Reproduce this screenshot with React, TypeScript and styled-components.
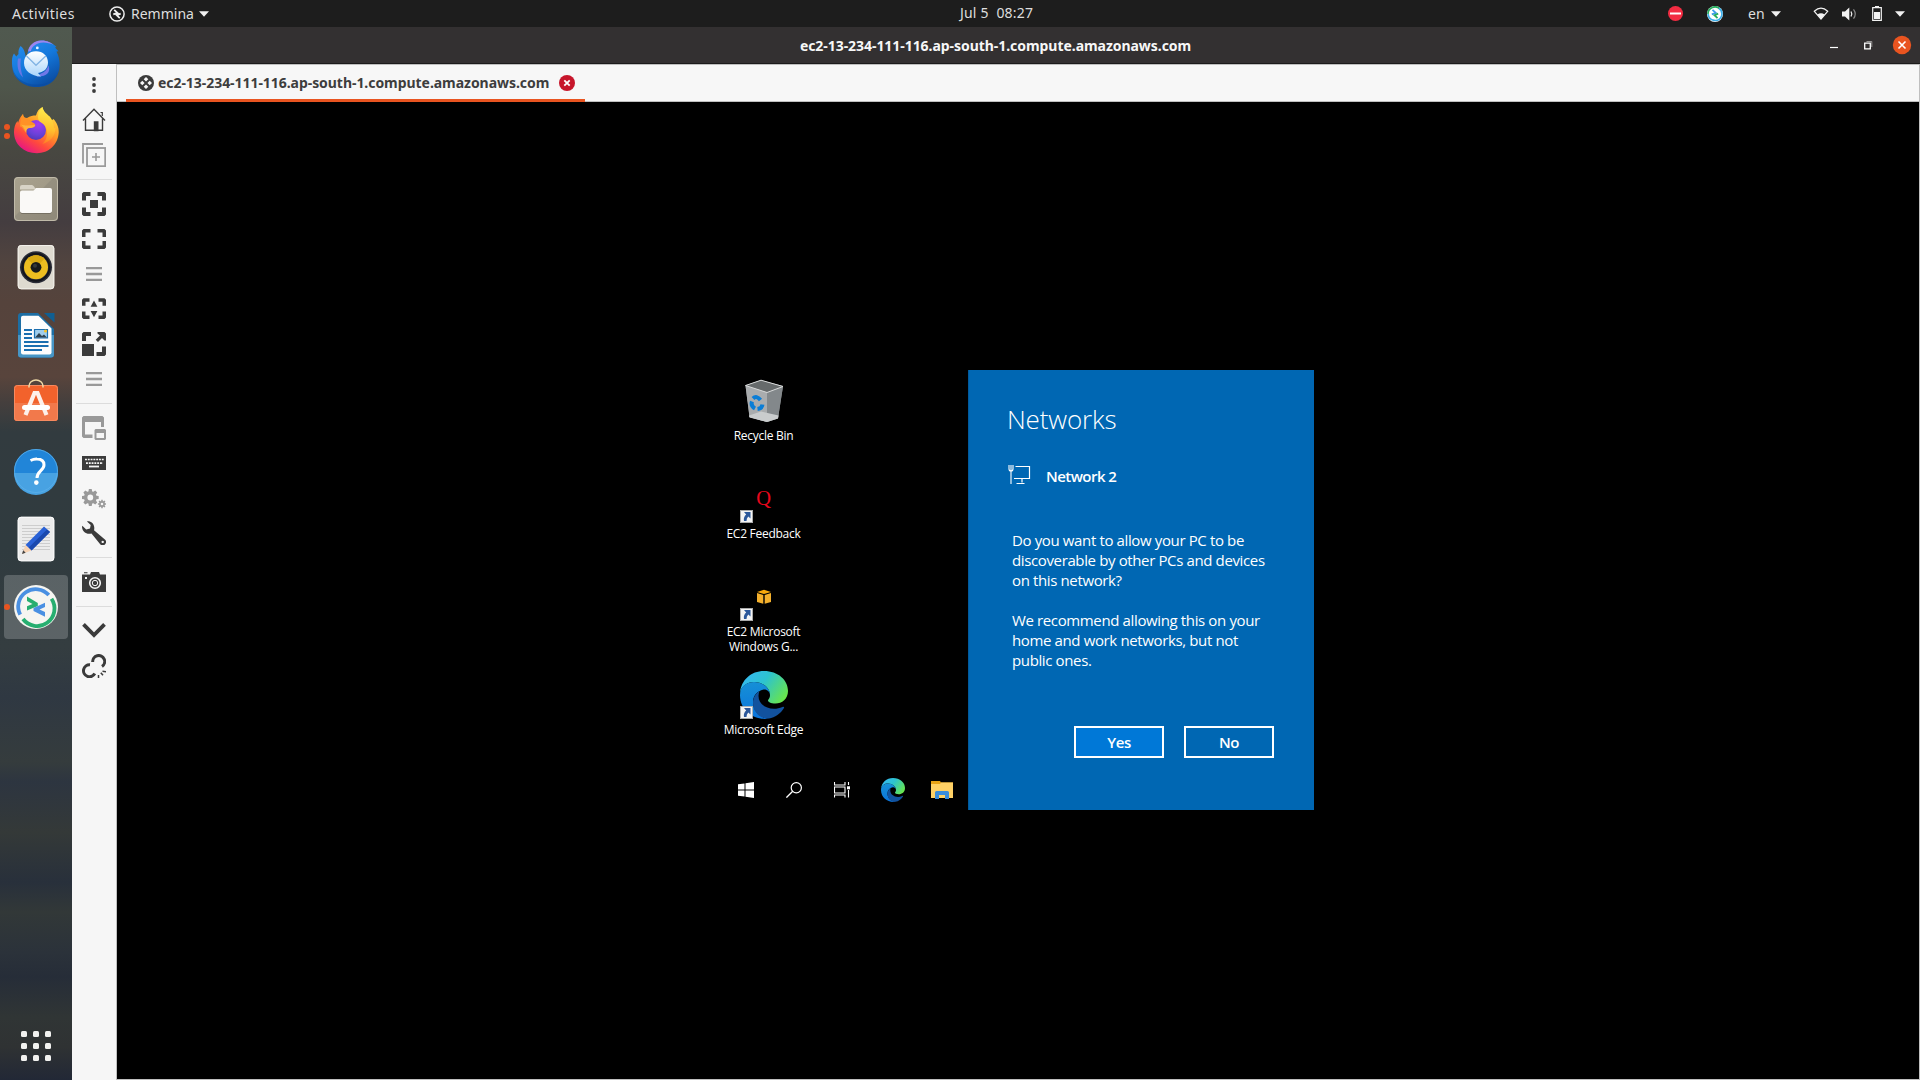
import React from 'react';
import styled, { createGlobalStyle } from 'styled-components';

const GlobalStyle = createGlobalStyle`
  * { box-sizing: border-box; }
  html, body { margin: 0; padding: 0; background: #000; overflow: hidden; }
  svg { display: block; flex: none; }
  button { font: inherit; color: inherit; padding: 0; background: none; border: 0; }
`;

const ubuntu = `'Noto Sans', 'Open Sans', sans-serif`;
const segoe = `'Open Sans', 'Noto Sans', sans-serif`;

const Screen = styled.div`
  width: 1920px;
  height: 1080px;
  display: grid;
  grid-template-rows: 27px 1053px;
  background: #000;
`;

const TopBar = styled.header`
  display: grid;
  grid-template-columns: 960px 76px 1fr;
  align-items: center;
  height: 27px;
  background: #1d1d1d;
  color: #dedede;
  font: 14px/27px ${ubuntu};
`;
const BarSide = styled.div<{ $end?: boolean }>`
  display: flex;
  align-items: center;
  height: 27px;
  justify-content: ${p => (p.$end ? 'flex-end' : 'flex-start')};
  padding: ${p => (p.$end ? '0 15px 0 0' : '0 0 0 12px')};
`;
const BarText = styled.span<{ $track?: number; $gap?: number; $w?: number }>`
  white-space: pre;
  letter-spacing: ${p => p.$track ?? 0}px;
  margin-left: ${p => p.$gap ?? 0}px;
  width: ${p => (p.$w ? `${p.$w}px` : 'auto')};
`;
const Clock = styled.time`
  white-space: pre;
  letter-spacing: 0.2px;
  line-height: 25px;
  height: 27px;
`;
const BarIcon = styled.span<{ $gap: number }>`
  margin-left: ${p => p.$gap}px;
`;

const Workspace = styled.div`
  display: grid;
  grid-template-columns: 72px 1848px;
`;

const Dock = styled.nav`
  display: flex;
  flex-direction: column;
  align-items: center;
  padding-top: 2px;
  height: 1053px;
  background: linear-gradient(
    180deg,
    #50594f 0, #4f564b 60px, #484841 120px, #443d40 195px, #51443f 235px,
    #55433c 275px, #58443c 350px, #453f3d 375px, #323b3f 405px, #303b3f 520px,
    #343d40 620px, #2f3842 670px, #353c3d 735px, #2d3540 755px, #343938 805px,
    #28303b 855px, #323838 885px, #2b323a 925px, #262d38 950px, #303535 990px,
    #2f3233 1020px, #222836 1053px
  );
`;
const DockItem = styled.div<{ $active?: boolean }>`
  position: relative;
  width: 64px;
  height: 64px;
  margin: 2px 0;
  display: grid;
  place-items: center;
  border-radius: 4px;
  background: ${p => (p.$active ? 'rgba(255,255,255,0.2)' : 'transparent')};
`;
const RunDots = styled.span`
  position: absolute;
  left: 0;
  top: 0;
  height: 64px;
  display: flex;
  flex-direction: column;
  justify-content: center;
  gap: 3px;
`;
const RunDot = styled.i`
  width: 6px;
  height: 6px;
  border-radius: 50%;
  background: #e95420;
`;
const AppsButton = styled.div`
  margin-top: auto;
  margin-bottom: 19px;
  display: grid;
  grid-template-columns: repeat(3, 6px);
  gap: 6px;
`;
const AppsDot = styled.i`
  width: 6px;
  height: 6px;
  border-radius: 1.5px;
  background: #f2f2f0;
`;

const Window = styled.section`
  display: grid;
  grid-template-rows: 37px 1016px;
`;
const TitleBar = styled.div`
  display: grid;
  grid-template-columns: 1fr 400px 1fr;
  align-items: center;
  height: 37px;
  background: #333031;
  border-bottom: 1px solid #1c1b1b;
  color: #f7f7f7;
`;
const WindowTitle = styled.h1`
  grid-column: 2;
  margin: 0;
  padding: 2px 1px 0 0;
  font: 700 14px/34px ${ubuntu};
  letter-spacing: -0.05px;
  text-align: center;
  white-space: nowrap;
`;
const WindowControls = styled.div`
  display: flex;
  justify-content: flex-end;
  align-items: center;
  padding-right: 8px;
`;

const WindowBody = styled.div`
  display: grid;
  grid-template-columns: 44px 1804px;
  background: #f6f6f6;
`;
const Toolbar = styled.aside`
  display: flex;
  flex-direction: column;
  align-items: center;
  gap: 11px;
  padding-top: 9px;
  background: #f6f6f6;
`;
const ToolSeparator = styled.i`
  width: 36px;
  height: 3px;
  border: solid transparent;
  border-width: 1px 0;
  background: #dcdcdc content-box;
`;

const Main = styled.div`
  display: grid;
  grid-template-rows: 37px 977px;
  border: 1px solid #bfbfbf;
`;
const TabBar = styled.div`
  display: flex;
  padding-left: 9px;
  background: #f7f7f7;
  border-bottom: 1px solid #bfbfbf;
  height: 37px;
`;
const Tab = styled.div`
  display: flex;
  align-items: center;
  width: 459px;
  height: 37px;
  padding: 1px 10px 0 12px;
  border-bottom: 3px solid #e95420;
  color: #3d3d3d;
  font: 700 14px/34px ${ubuntu};
`;
const TabLabel = styled.span`
  width: 401px;
  margin-left: 4px;
  letter-spacing: -0.05px;
  white-space: nowrap;
`;

const Viewport = styled.div`
  background: #000;
  padding: 268px 0 0 599px;
  display: flex;
  align-items: flex-start;
`;
const Desktop = styled.div`
  width: 252px;
  height: 440px;
  display: flex;
  flex-direction: column;
`;
const Shortcuts = styled.div`
  width: 96px;
  height: 400px;
  padding-top: 7px;
`;
const Shortcut = styled.div`
  width: 96px;
  height: 98px;
  display: flex;
  flex-direction: column;
  align-items: center;
  gap: 3px;
`;
const ShortcutName = styled.span`
  color: #fff;
  font: 12px/15px ${segoe};
  letter-spacing: -0.27px;
  padding-right: 1px;
  text-align: center;
  white-space: pre;
`;
const Taskbar = styled.div`
  height: 40px;
  display: flex;
  align-items: center;
  padding-left: 22px;
`;
const TaskIcon = styled.span<{ $gap?: number }>`
  margin-left: ${p => p.$gap ?? 0}px;
`;

const Flyout = styled.section`
  width: 346px;
  height: 440px;
  background: #0067b3;
  border-left: 1px solid #00599c;
  color: #fff;
  padding: 31px 39px 0 39px;
  font-family: ${segoe};
`;
const FlyoutTitle = styled.h2`
  margin: 0 0 0 -1px;
  font: 340 26px/36px ${segoe};
  letter-spacing: -0.15px;
`;
const NetworkRow = styled.div`
  display: flex;
  align-items: center;
  gap: 15px;
  height: 24px;
  margin-top: 25px;
`;
const NetworkIcon = styled.span`
  padding-top: 2px;
`;
const NetworkName = styled.strong`
  font: 600 15px/24px ${segoe};
  letter-spacing: -0.55px;
  margin-top: 3px;
`;
const Message = styled.p<{ $top: number }>`
  margin: ${p => p.$top}px 0 0 4px;
  font: 15px/20px ${segoe};
  letter-spacing: -0.37px;
  white-space: pre;
`;
const Actions = styled.div`
  display: flex;
  gap: 20px;
  margin: 56px 0 0 66px;
`;
const ActionButton = styled.button<{ $primary?: boolean }>`
  width: 90px;
  height: 32px;
  border: 2px solid #fff;
  background: ${p => (p.$primary ? '#0078d7' : 'transparent')};
  font: 600 15px/28px ${segoe};
  letter-spacing: -0.4px;
`;

const Caret = () => (
  <svg width="10" height="6" viewBox="0 0 10 6"><path d="M0 .3h10L5 5.8z" fill="#f0f0f0" /></svg>
);

const RemminaSmall = ({ mono }: { mono?: boolean }) => (
  <svg width="16" height="16" viewBox="0 0 16 16">
    {mono ? (
      <>
        <circle cx="8" cy="8" r="7.1" fill="none" stroke="#eee" strokeWidth="1.5" />
        <path d="M5.200 3.800 8.400 6.800 4.300 8.300M10.800 12.200 7.700 9.200 11.700 7.700" fill="none" stroke="#eee" strokeWidth="1.8" />
      </>
    ) : (
      <>
        <circle cx="8" cy="8" r="8" fill="#fff" />
        <path d="M1 8a7 7 0 0 1 12-5" fill="none" stroke="#27ae60" strokeWidth="1.7" />
        <path d="M12 2.3A7 7 0 0 1 14.6 10" fill="none" stroke="#3daee9" strokeWidth="1.7" />
        <path d="M1.1 8A7 7 0 0 0 14.6 10" fill="none" stroke="#3daee9" strokeWidth="1.7" />
        <path d="M5.500 3.800 8.800 6.800 4.800 8.300" fill="none" stroke="#3d9be9" strokeWidth="1.8" />
        <path d="M10.500 12.200 7.500 9.200 11.200 7.700" fill="none" stroke="#27ae60" strokeWidth="1.8" />
      </>
    )}
  </svg>
);

const Thunderbird = () => (
  <svg width="48" height="48" viewBox="0 0 48 48">
    <defs>
      <linearGradient id="tb" x1="0" y1="0" x2="0.6" y2="1"><stop offset="0" stopColor="#2a92f2" /><stop offset="0.55" stopColor="#1478dc" /><stop offset="1" stopColor="#0b4fa6" /></linearGradient>
      <linearGradient id="tbm" x1="0" y1="0" x2="0" y2="1"><stop offset="0" stopColor="#fff" /><stop offset="1" stopColor="#a9d5fb" /></linearGradient>
    </defs>
    <path d="M8.500 7c-2 3-2.300 6-2 8L4.300 17.500 2 14.500C-.5 18 0 23 0 25c.3 7 2.500 12 6 15.500 5 5 12 7.500 19 7.500 13 0 22-8.500 22.600-21.500.2-5-1-10-3.100-14l2-.3-3.500-3.700 1.500-.6C40 3.500 33 .8 27.500 1.800 20 3.500 17 8 16 12.500l-1.800 6c-1.500-3-1-8.500-5.700-11.500z" fill="url(#tb)" />
    <path d="M16 12.500c1-6 5.500-10.500 13-11 6-.2 10 2.200 12.500 4.300-5-2.300-11-3.200-15.500-1.300-5 2-6.500 5-7 7.500z" fill="#9a86ef" />
    <path d="M0 25c.5 13 8 20 18 22.500C30 49 42 44 47 32c-3 10-11 13.500-22 13.500C11 45.500 1 38 0 25z" fill="#0a4ba0" opacity=".55" />
    <path d="M6 19.500c-1.500 8 .5 15 5 19-1.500-5-3.500-12-2-19z" fill="#8277e8" opacity=".75" />
    <path d="M29 34.500c4-1.500 6-4 7.500-8 2.500 7-2 11.500-12 11z" fill="#6f78e8" />
    <path d="M24 12.200c7 0 12 4.800 12 11.300 0 6-4 9-8 10l-2 .5 3 3.500c-10-.2-17-6-17-13.500 0-7 5-11.800 12-11.800z" fill="url(#tbm)" />
    <path d="M14.500 17 24 26.300 33.800 17" fill="none" stroke="#82b4e4" strokeWidth="1.300" />
    <circle cx="25.300" cy="8.900" r="1.400" fill="#e8f6ff" />
  </svg>
);

const Firefox = () => (
  <svg width="48" height="48" viewBox="0 0 48 48">
    <defs>
      <linearGradient id="ff" x1="0.85" y1="0.05" x2="0.25" y2="1"><stop offset="0" stopColor="#ffe94a" /><stop offset="0.4" stopColor="#ff9a25" /><stop offset="0.7" stopColor="#ff4a3d" /><stop offset="1" stopColor="#e5108a" /></linearGradient>
      <radialGradient id="fp" cx="0.6" cy="0.2" r="0.9"><stop offset="0" stopColor="#a63bf0" /><stop offset="0.6" stopColor="#6a41d8" /><stop offset="1" stopColor="#4a36b0" /></radialGradient>
      <linearGradient id="fy" x1="0.6" y1="0" x2="0.5" y2="1"><stop offset="0" stopColor="#fff04f" /><stop offset="0.6" stopColor="#ffc02e" /><stop offset="1" stopColor="#ff7d26" /></linearGradient>
    </defs>
    <path d="M11 7c0 3 2 4 4 4 3-2 6-2.500 9-2.500 1-4 3-7 6.500-8.500.5 4 3.500 6.500 7 9.500 1 .8 1.500 2.500 2 4l2-1.500c3 3.500 5.500 8 5.200 13.500C46 38 36.500 46.200 25 46.200 12 46.200 2 37.500 2 25c0-4 1-8.500 3.500-11l.5 2C7 12 9 9 11 7z" fill="url(#ff)" />
    <circle cx="24" cy="23" r="10" fill="url(#fp)" />
    <path d="M30.500 0c.5 4 3.500 6.500 7 9.500 3 3 4.500 8 4.500 12l1.500-1c0 9-6 14.500-13 16.500 3-3 5-7 4.500-12-.5-5.500-3-8-7.500-10.500C25 12 25.500 4 30.500 0z" fill="url(#fy)" />
    <path d="M11 7c0 3 2 4.500 4 5 3 .3 4 2.500 8 5 1 2-2 3.500-5.500 3.500-3 0-3.500 2-3 5.500C12 24.500 11 19.500 8 19.500 8 14.500 9 10.500 11 7z" fill="#ff9226" />
    <path d="M9 17.500c4 1.500 8 1 14 .5 1 1.500-2 3-5 3-2.500 0-4 2-4 4.500-1-3-2.500-6-5-8z" fill="#ffb23c" />
  </svg>
);

const Files = () => (
  <svg width="48" height="48" viewBox="0 0 48 48">
    <defs><linearGradient id="fl" x1="0" y1="0" x2="1" y2="1"><stop offset="0" stopColor="#a8a18e" /><stop offset=".45" stopColor="#a29b88" /><stop offset=".46" stopColor="#969080" /><stop offset="1" stopColor="#8f8979" /></linearGradient></defs>
    <rect x="2" y="2" width="44" height="44" rx="4" fill="url(#fl)" />
    <rect x="2.500" y="2.500" width="43" height="43" rx="3.500" fill="none" stroke="#c0baa9" />
    <path d="M8 12q0-2 2-2h10q1 0 2 1.500l2 3H8z" fill="#d8d3c6" />
    <path d="M8 17.500q0-2 2-2h11q1 0 2-1.500l1-1h14q2 0 2 2V36q0 2-2 2H10q-2 0-2-2z" fill="#faf9f7" />
    <path d="M8.500 37.500q.5 1 1.500 1h28q1 0 1.500-1" fill="none" stroke="#6f6a5d" strokeWidth=".8" />
  </svg>
);

const Rhythmbox = () => (
  <svg width="48" height="48" viewBox="0 0 48 48">
    <rect x="5.700" y="2" width="36.600" height="44.300" rx="3.500" fill="#dedad0" />
    <rect x="6.200" y="2.500" width="35.600" height="43.300" rx="3" fill="none" stroke="#f3f1eb" />
    <circle cx="24" cy="24.300" r="16" fill="#2a2c37" />
    <circle cx="24" cy="24.300" r="13.500" fill="none" stroke="#14151c" strokeWidth="2" />
    <circle cx="24" cy="24.300" r="12" fill="#edbd20" />
    <path d="M15.500 15.800a12 12 0 0 1 17 0L24 24.300z" fill="#d9a913" />
    <circle cx="24" cy="24.300" r="5.400" fill="#17191b" />
    <circle cx="23" cy="22.800" r="2" fill="#34383b" />
  </svg>
);

const Writer = () => (
  <svg width="48" height="48" viewBox="0 0 48 48">
    <path d="M9 2h17l16 16v25.500q0 3-3 3H9q-3 0-3-3V5q0-3 3-3z" fill="#1c6ea4" />
    <path d="M6 24h36v19.500q0 3-3 3H9q-3 0-3-3z" fill="#4796c6" />
    <path d="M32 2h10.500v9.500z" fill="#105f92" />
    <path d="M11 4.700h15.500L39.500 17.500v24q0 2-2 2H11q-2 0-2-2V6.700q0-2 2-2z" fill="#fdfdfd" />
    <g stroke="#1b6fb0" strokeWidth="1.900"><path d="M12 19h8M12 23h8M12 27h8M12 31h24.500M12 35h24.500M12 39h18" /></g>
    <path d="M22.500 18.500h13v8.500h-13z" fill="#9fcdec" stroke="#1b6fb0" strokeWidth="1.200" />
    <path d="m23 26.500 4-4.500 3 3 2-1.500 3 3z" fill="#2e4250" /><circle cx="33.500" cy="20" r="1.500" fill="#f8c020" />
  </svg>
);

const Software = () => (
  <svg width="48" height="48" viewBox="0 0 48 48">
    <rect x="2" y="6" width="44" height="36" rx="3.500" fill="#f2622c" />
    <path d="M2 24h44v14.500q0 3.500-3.500 3.500h-37Q2 42 2 38.500z" fill="#f2794b" />
    <rect x="2.500" y="6.500" width="43" height="35" rx="3" fill="none" stroke="#f78a60" />
    <path d="M17 8.500V7a7 6 0 0 1 14 0v1.500" fill="none" stroke="#f0d9a6" strokeWidth="1.500" />
    <path d="M13.500 36 22.500 14h3l9 22" fill="none" stroke="#fdf0ea" strokeWidth="4.200" />
    <rect x="10" y="26" width="28" height="5" rx="2.500" fill="#fff" />
  </svg>
);

const Help = () => (
  <svg width="48" height="48" viewBox="0 0 48 48">
    <circle cx="24" cy="24" r="22" fill="#2185d8" />
    <path d="M2 26h44a22 22 0 0 1-44 0z" fill="#48a2e2" />
    <circle cx="24" cy="24" r="21.500" fill="none" stroke="#5cb0ea" strokeWidth=".8" />
    <path d="M18.500 13.500Q22 11.800 25 12c4.500 0 7 2.400 7 6 0 5.500-7 6-7 13" fill="none" stroke="#fff" strokeWidth="3" />
    <circle cx="24.300" cy="35.600" r="2.300" fill="#fff" />
  </svg>
);

const TextEditor = () => (
  <svg width="48" height="48" viewBox="0 0 48 48">
    <rect x="5.700" y="1.800" width="36.600" height="44.500" rx="3.500" fill="#ececec" />
    <rect x="6.200" y="2.300" width="35.600" height="43.500" rx="3" fill="none" stroke="#fbfbfb" />
    <path d="M10 10.500h28M10 13.500h28M10 16.500h28M10 19.500h28M10 22.500h28M10 25.500h28M10 28.500h28M10 31.500h28M10 34.500h28" stroke="#cdcdcd" strokeWidth="1" />
    <path d="m32 11.500 6 5.500-18.500 18.500-6-5.500z" fill="#2a62d6" />
    <path d="m35 14.500 3 2.500-18.500 18.500-3-2.700z" fill="#1a49ae" />
    <path d="m13.500 30 6 5.500L10 39z" fill="#f7d3b4" /><path d="m11.200 35.300 2.500 2.400L10 39z" fill="#444" />
  </svg>
);

const RemminaIcon = () => (
  <svg width="48" height="48" viewBox="0 0 48 48">
    <circle cx="24" cy="24" r="22" fill="#f6f5f1" />
    <path d="M8.200 31.700A17.500 17.500 0 0 1 36.800 12" fill="none" stroke="#4a90e2" strokeWidth="3.800" />
    <path d="M39.500 15.700A17.500 17.500 0 0 1 11 36" fill="none" stroke="#27ae70" strokeWidth="3.800" />
    <path d="M15 13.500 25.800 20v3L15 27.500v-4.300l5.500-2.200L15 18z" fill="#27ae70" />
    <path d="M33 33.800 21.500 28v-3L33 19.800v4.300l-5.500 2.500 5.500 2.500z" fill="#4a90e2" />
  </svg>
);

type ToolKind = 'dots' | 'home' | 'dup' | 'fit' | 'full' | 'menu' | 'dynamic' | 'scale' | 'multi' | 'keyboard' | 'gears' | 'wrench' | 'camera' | 'chevron' | 'unlink';
const DARK = '#3b3b3b';
const GREY = '#999999';

const gear = (cx: number, cy: number, r: number, inner: number, hole: number, teeth: number) => {
  const pts: string[] = [];
  for (let i = 0; i < teeth; i++) {
    const a = (i * 2 * Math.PI) / teeth;
    const s = Math.PI / teeth;
    [[-0.75, inner], [-0.42, r], [0.42, r], [0.75, inner]].forEach(([k, rad]) => {
      pts.push(`${(cx + Math.cos(a + k * s) * rad).toFixed(2)} ${(cy + Math.sin(a + k * s) * rad).toFixed(2)}`);
    });
  }
  return `M${pts.join('L')}ZM${cx - hole} ${cy}a${hole} ${hole} 0 1 0 ${2 * hole} 0a${hole} ${hole} 0 1 0 ${-2 * hole} 0Z`;
};

const toolArt: Record<ToolKind, React.ReactNode> = {
  dots: <g fill={DARK}><circle cx="12" cy="6" r="1.900" /><circle cx="12" cy="12" r="1.900" /><circle cx="12" cy="18" r="1.900" /></g>,
  home: <g fill="none" stroke={DARK} strokeWidth="1.400"><path d="M1 12.500 12 1.300l11 11.200M3.500 10.500v11.800h17V10.500" /><path d="M18.500 4.500h1.800V8" strokeWidth="1.200" /><path d="M12.500 22.500V14h3.300v8.500z" fill={DARK} /></g>,
  dup: <g fill="none" stroke={GREY} strokeWidth="1.800"><path d="M1 20.500V1h20" /><rect x="5" y="5" width="18.200" height="18.200" /><path d="M14 10v8M10 14h8" strokeWidth="1.600" /></g>,
  fit: <g fill={DARK}><path d="M1.500 0H8.500v4H4v4.500H0v-7zM15.500 0h7L24 1.500v7h-4V4h-4.500zM0 15.500h4V20h4.500v4h-7L0 22.500zM20 15.500h4v7L22.500 24h-7v-4H20z" /><path d="M8 8h8v8H8z" /></g>,
  full: <path fill={DARK} d="M1.500 2H8.500v3.500H3.500v4.500H0V3.500zM15.500 2h7L24 3.500V10h-3.500V5.500h-5zM0 14h3.500v4.500h5V22h-7L0 20.500zM20.500 14H24v6.500L22.500 22h-7v-3.500h5z" />,
  menu: <path d="M4 6.100h16M4 12h16M4 17.900h16" stroke={GREY} strokeWidth="2.400" />,
  dynamic: <g fill={DARK}><path d="M1.500 1.300H7.500v3.500H3.500v4H0V2.800zM16.500 1.300h6L24 2.800v6h-3.500v-4h-4zM0 14.500h3.500v4h4V22h-6L0 20.500zM20.500 14.500H24v6L22.500 22h-6v-3.500h4z" /><path d="m12 3.500 3.400 6.200H8.600zM12 20.300l3.400-6.200H8.600z" /></g>,
  scale: <g fill={DARK}><path d="M0 12h12v12H0zM1.500 0H9v4H4v5H0V1.500zM20 14.500h4v8L22.500 24h-8v-4H20z" /><path d="M15.500 0H22.500L24 1.500v7h-1.500L20 6l-4 4-2.300-2.200L18 3.600 15.500 1.500z" /></g>,
  multi: <g fill={GREY}><path d="M1.500 0h19L22 1.500V11h-3V6H3v12.500h7.500V22h-9L0 20.500v-19z" /><path fillRule="evenodd" d="M13.500 13H23l1 1v9l-1 1h-9.500l-1-1v-9zm1 4v5h7.500v-5z" /></g>,
  keyboard: <g><rect y="5" width="24" height="14" fill={DARK} /><path d="M3 8.500h19M4 12.100h17" stroke="#f6f6f6" strokeWidth="1.700" strokeDasharray="1.900 .9" /><path d="M7 15.500h10" stroke="#f6f6f6" strokeWidth="1.800" /></g>,
  gears: <g fill={GREY} fillRule="evenodd"><path d={gear(8.3, 11.5, 8.5, 6.4, 2.9, 8)} /><path d={gear(20, 18, 4.2, 3, 1.3, 8)} /></g>,
  wrench: <path fill={DARK} fillRule="evenodd" d="M5 .4C9 0 12.500 3 12.300 7.200c0 .9-.1 1.400-.3 2l10.900 9.300a3.300 3.300 0 0 1-4.500 4.900L9.500 12.400C5 13.700.5 11.500 0 6l.3-1.200 3.900 3.600 3.800-.8.700-3.500zM20.700 19.700a1.200 1.200 0 1 0 .01 0z" />,
  camera: <g fill={DARK}><path d="M0 4.500h8L9 2h8l1 2.500h6V22H0zM2 2.300h3.500v1H2z" /><circle cx="13" cy="13" r="5.300" fill={DARK} stroke="#f6f6f6" strokeWidth="1.600" /><circle cx="13" cy="13" r="2.700" fill="none" stroke="#f6f6f6" strokeWidth="1" /><path d="M3 8h2" stroke="#f6f6f6" strokeWidth="1.800" /></g>,
  chevron: <path d="M1.500 5.300 12 16l10.500-10.700" fill="none" stroke={DARK} strokeWidth="3.800" />,
  unlink: <g fill="none" stroke={DARK}><path d="M10.700 8A6 6 0 1 1 20 12.500M8 10.700A6 6 0 1 0 12.800 19.500" strokeWidth="3" /><path d="M16.500 21v3M18.800 18.800l2.200 2.500M20.500 17.300l3.500.4" strokeWidth="1.500" /></g>,
};
const ToolIcon = ({ kind }: { kind: ToolKind }) => (
  <svg width="24" height="24" viewBox="0 0 24 24">{toolArt[kind]}</svg>
);

const TOOLS: (ToolKind | '|')[] = ['dots', 'home', 'dup', '|', 'fit', 'full', 'menu', 'dynamic', 'scale', 'menu', '|', 'multi', 'keyboard', 'gears', 'wrench', '|', 'camera', '|', 'chevron', 'unlink'];

const ShortcutArrow = () => (
  <g><rect x=".4" y="35.400" width="12.200" height="12.200" fill="#f4f4f4" stroke="#b0b0b0" strokeWidth=".8" /><path d="M4 37h6.500v6.500L8.300 41.500Q6.500 43 6.500 46H4q-.8-4 2.200-6.500z" fill="#2b579a" /></g>
);

const EdgeShape = ({ id }: { id: string }) => (
  <g>
    <defs>
      <linearGradient id={`${id}a`} x1="0" y1=".2" x2="1" y2=".7"><stop offset="0" stopColor="#35b8f5" /><stop offset=".45" stopColor="#2dc3cf" /><stop offset="1" stopColor="#69e54b" /></linearGradient>
      <linearGradient id={`${id}b`} x1=".3" y1="0" x2=".4" y2="1"><stop offset="0" stopColor="#1690d6" /><stop offset="1" stopColor="#0a74dc" /></linearGradient>
    </defs>
    <path d="M0 22C1 9 11 0 24 0c14 0 24 9 24 20 0 8-6 12.500-12.500 12.500-5 0-7.500-1.500-7.500-3 0-1 2-2 2-5.500 0-7-7-13-16-13C7 11 1.500 15 0 22z" fill={`url(#${id}a)`} />
    <path d="M0 24c0-8 6-13 14-13 9 0 16 6 16 13 0-3-3-6-6.500-5.500C17 20 13 25 13 31c0 9 7 16 16 16.500C15 50 0 40 0 24z" fill={`url(#${id}b)`} />
    <path d="M19.500 20C16 22.500 13 26 13 32c0 9 7 16 16 15.600 6-1 11.500-5 15-10.600.5-1-.5-1.700-1.500-1C31 41 18.500 35 18.500 25q0-3 1-5z" fill="#12529e" />
  </g>
);

const RecycleBin = () => (
  <svg width="48" height="48" viewBox="0 0 48 48">
    <path d="M5.500 8.500 21 3.200 43 9 38 41.500 27 45 9.500 40z" fill="#8d9194" />
    <path d="M5.500 8.500 27 15.500 27 45 9.500 40z" fill="#a9acae" /><path d="M27 15.500 43 9.500 38 41 27 45z" fill="#83888b" />
    <path d="M9 38.500 21 34.500l17.500 4L38 41.500 27 45 9.500 40.500z" fill="#c9cccd" />
    <path d="M5.500 8.500 21 3.200 43 9.500 27 15.500z" fill="#666a6b" stroke="#d8dada" strokeWidth="1" />
    <g fill="none" stroke="#0a7dd6" strokeWidth="4"><path d="M13 21.500q3.500-3.500 7.500 1.500M12 24.500q-1.500 4.500 3 7M22.500 27.500q-.5 4-5 4.500" /></g>
  </svg>
);
const FeedbackIcon = () => (
  <svg width="48" height="48" viewBox="0 0 48 48"><text x="16.300" y="30" fontFamily="'Liberation Serif', serif" fontSize="20.500" fill="#e8071c">Q</text><ShortcutArrow /></svg>
);
const GuideIcon = () => (
  <svg width="48" height="48" viewBox="0 0 48 48">
    <path d="m17 19 7-2.200 7 2.200-7 2z" fill="#f9a90c" /><path d="m17 20 6.300 2v8.700L17 29zM31 20l-6.300 2v8.700L31 29z" fill="#f4b02c" /><ShortcutArrow />
  </svg>
);
const EdgeIcon = () => (
  <svg width="48" height="48" viewBox="0 0 48 48"><EdgeShape id="edgeL" /><ShortcutArrow /></svg>
);

const StatusArea = () => (
  <BarSide $end>
    <BarIcon $gap={0}><svg width="15" height="15" viewBox="0 0 15 15"><circle cx="7.500" cy="7.500" r="7.500" fill="#f22c42" /><path d="M2 7.500h11" stroke="#fff" strokeWidth="2" /></svg></BarIcon>
    <BarIcon $gap={24}><RemminaSmall /></BarIcon>
    <BarText $gap={25} $w={17}>en</BarText>
    <BarIcon $gap={6}><Caret /></BarIcon>
    <BarIcon $gap={32}>
      <svg width="16" height="13" viewBox="0 0 16 13"><path d="M1.300 4.300Q8-2.200 14.700 4.300L8 12z" fill="none" stroke="#f2f2f2" strokeWidth="1.200" /><path d="M4.300 7.500Q8 4.800 11.700 7.500L8 12z" fill="#f2f2f2" /></svg>
    </BarIcon>
    <BarIcon $gap={13}>
      <svg width="15" height="14" viewBox="0 0 15 14"><path d="M0 4.500h3L7.300.5v13L3 9.500H0z" fill="#f2f2f2" /><path d="M9 4.500q1.600 2.500 0 5" fill="none" stroke="#f2f2f2" strokeWidth="1.300" /><path d="M11.500 2.300q3.500 4.700 0 9.400" fill="none" stroke="#8a8a8a" strokeWidth="1.200" /></svg>
    </BarIcon>
    <BarIcon $gap={15}>
      <svg width="10" height="15" viewBox="0 0 10 15"><path d="M.7 1.700h8.600v12.600H.7z" fill="none" stroke="#f2f2f2" strokeWidth="1.200" /><path d="M3 0h4v1.500H3zM2 6h6v7H2z" fill="#f2f2f2" /></svg>
    </BarIcon>
    <BarIcon $gap={13}><Caret /></BarIcon>
  </BarSide>
);

const DOCK: { icon: React.ReactNode; dots?: number; active?: boolean }[] = [
  { icon: <Thunderbird /> }, { icon: <Firefox />, dots: 2 }, { icon: <Files /> }, { icon: <Rhythmbox /> },
  { icon: <Writer /> }, { icon: <Software /> }, { icon: <Help /> }, { icon: <TextEditor /> },
  { icon: <RemminaIcon />, dots: 1, active: true },
];

const HOST = 'ec2-13-234-111-116.ap-south-1.compute.amazonaws.com';

export default function App() {
  return (
    <>
      <GlobalStyle />
      <Screen>
        <TopBar>
          <BarSide>
            <BarText $w={97} $track={0.45}>Activities</BarText>
            <BarIcon $gap={0}><RemminaSmall mono /></BarIcon>
            <BarText $gap={6} $w={62}>Remmina</BarText>
            <BarIcon $gap={6}><Caret /></BarIcon>
          </BarSide>
          <Clock>{'Jul 5  08:27'}</Clock>
          <StatusArea />
        </TopBar>
        <Workspace>
          <Dock>
            {DOCK.map((d, i) => (
              <DockItem key={i} $active={d.active}>
                {d.dots && <RunDots>{Array.from({ length: d.dots }, (_, k) => <RunDot key={k} />)}</RunDots>}
                {d.icon}
              </DockItem>
            ))}
            <AppsButton>{Array.from({ length: 9 }, (_, i) => <AppsDot key={i} />)}</AppsButton>
          </Dock>
          <Window>
            <TitleBar>
              <WindowTitle>{HOST}</WindowTitle>
              <WindowControls>
                <svg width="82" height="20" viewBox="0 0 82 20">
                  <path d="M0 12.500h8" stroke="#fff" strokeWidth="1.200" />
                  <path d="M34.700 8.200h5.600v5.600h-5.600z" fill="none" stroke="#fff" strokeWidth="1.300" />
                  <path d="M36.500 6.500h5.300v5.500" fill="none" stroke="#9a9898" strokeWidth="1" />
                  <circle cx="72" cy="10" r="9.200" fill="#e95420" />
                  <path d="m68.500 6.500 7 7m0-7-7 7" stroke="#fff" strokeWidth="1.600" />
                </svg>
              </WindowControls>
            </TitleBar>
            <WindowBody>
              <Toolbar>
                {TOOLS.map((t, i) => (t === '|' ? <ToolSeparator key={i} /> : <ToolIcon key={i} kind={t} />))}
              </Toolbar>
              <Main>
                <TabBar>
                  <Tab>
                    <svg width="16" height="16" viewBox="0 0 16 16">
                      <circle cx="8" cy="8" r="8" fill={DARK} />
                      <path d="m8 2 2.300 2.300L8 6.600 5.700 4.300zM8 9.400l2.300 2.300L8 14l-2.300-2.300zM4.300 5.700 6.600 8l-2.300 2.300L2 8zM11.700 5.700 14 8l-2.300 2.300L9.400 8z" fill="#f7f7f7" />
                    </svg>
                    <TabLabel>{HOST}</TabLabel>
                    <svg width="16" height="16" viewBox="0 0 16 16"><circle cx="8" cy="8" r="8" fill="#c7162b" /><path d="m5.300 5.300 5.400 5.400m0-5.400-5.400 5.400" stroke="#fff" strokeWidth="1.800" /></svg>
                  </Tab>
                </TabBar>
                <Viewport>
                  <Desktop>
                    <Shortcuts>
                      <Shortcut><RecycleBin /><ShortcutName>Recycle Bin</ShortcutName></Shortcut>
                      <Shortcut><FeedbackIcon /><ShortcutName>EC2 Feedback</ShortcutName></Shortcut>
                      <Shortcut><GuideIcon /><ShortcutName>{'EC2 Microsoft\nWindows G...'}</ShortcutName></Shortcut>
                      <Shortcut><EdgeIcon /><ShortcutName>Microsoft Edge</ShortcutName></Shortcut>
                    </Shortcuts>
                    <Taskbar>
                      <TaskIcon>
                        <svg width="16" height="16" viewBox="0 0 16 16"><path d="M0 2.300 6.500 1.400v6.100H0zM7.500 1.200 16 0v7.500H7.500zM0 8.500h6.500v6.100L0 13.700zM7.500 8.500H16V16l-8.500-1.200z" fill="#fff" /></svg>
                      </TaskIcon>
                      <TaskIcon $gap={32}>
                        <svg width="16" height="16" viewBox="0 0 16 16"><circle cx="10.300" cy="5.700" r="5.100" fill="none" stroke="#fff" strokeWidth="1.200" /><path d="M6.700 9.300.4 15.600" stroke="#fff" strokeWidth="1.300" /></svg>
                      </TaskIcon>
                      <TaskIcon $gap={32}>
                        <svg width="16" height="16" viewBox="0 0 16 16"><path d="M.5 0v3h10.500V0M.5 15.500v-2.500h10.500v2.500M.5 5h10.500v6H.5zM14.500 0v3M14.500 8v7.500" fill="none" stroke="#fff" strokeWidth="1.100" /><path d="M13 4.300h3v3h-3z" fill="#fff" /></svg>
                      </TaskIcon>
                      <TaskIcon $gap={31}>
                        <svg width="24" height="24" viewBox="0 0 48 48"><EdgeShape id="edgeS" /></svg>
                      </TaskIcon>
                      <TaskIcon $gap={26}>
                        <svg width="22" height="18" viewBox="0 0 22 18"><path d="M0 0h9l1 1.500h12V17H0z" fill="#e8a317" /><path d="M0 3h9l1-1.500h12V17H0z" fill="#ffd166" /><path d="M4 18v-6.500q0-1.500 1.500-1.500h11q1.500 0 1.500 1.500V18h-4v-4H8v4z" fill="#3a8ddb" /></svg>
                      </TaskIcon>
                    </Taskbar>
                  </Desktop>
                  <Flyout>
                    <FlyoutTitle>Networks</FlyoutTitle>
                    <NetworkRow>
                      <NetworkIcon>
                        <svg width="23" height="20" viewBox="0 0 23 20"><path d="M1 0v4q0 2 2 2t2-2V0M3 0v19" fill="none" stroke="#fff" strokeWidth="1.100" /><path d="M7.500 1.500h14v12H6M14 13.500v4M8.500 18.500h8" fill="none" stroke="#fff" strokeWidth="1.200" /></svg>
                      </NetworkIcon>
                      <NetworkName>Network 2</NetworkName>
                    </NetworkRow>
                    <Message $top={44}>{'Do you want to allow your PC to be\ndiscoverable by other PCs and devices\non this network?'}</Message>
                    <Message $top={20}>{'We recommend allowing this on your\nhome and work networks, but not\npublic ones.'}</Message>
                    <Actions>
                      <ActionButton $primary>Yes</ActionButton>
                      <ActionButton>No</ActionButton>
                    </Actions>
                  </Flyout>
                </Viewport>
              </Main>
            </WindowBody>
          </Window>
        </Workspace>
      </Screen>
    </>
  );
}
